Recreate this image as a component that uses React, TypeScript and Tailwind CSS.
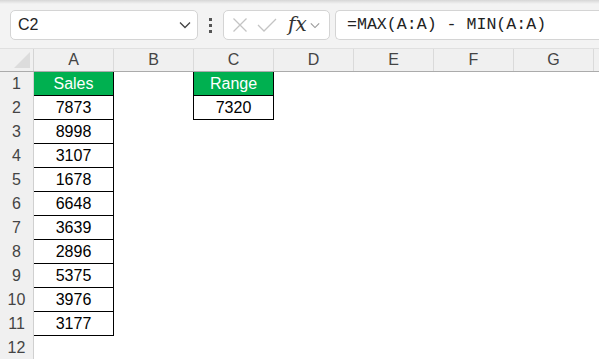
const cols = ["A", "B", "C", "D", "E", "F", "G"];
const sales = [7873, 8998, 3107, 1678, 6648, 3639, 2896, 5375, 3976, 3177];

type Cell = { text?: string; kind?: "head" | "data" };

function cellFor(row: number, col: string): Cell {
  if (col === "A") {
    if (row === 1) return { text: "Sales", kind: "head" };
    if (row <= 11) return { text: String(sales[row - 2]), kind: "data" };
  }
  if (col === "C") {
    if (row === 1) return { text: "Range", kind: "head" };
    if (row === 2) return { text: "7320", kind: "data" };
  }
  return {};
}

const Chevron = ({ className }: { className?: string }) => (
  <svg viewBox="0 0 12 8" className={className} fill="none" stroke="currentColor" strokeWidth="1.3">
    <path d="M1 1.5 L6 6.5 L11 1.5" />
  </svg>
);

export default function App() {
  const rows = Array.from({ length: 12 }, (_, i) => i + 1);
  return (
    <div className="w-[599px] h-[359px] overflow-hidden bg-white font-['Liberation_Sans',sans-serif]">
      {/* formula bar */}
      <div className="h-[48px] bg-[#f3f3f3] relative overflow-hidden">
        <div className="absolute inset-x-0 top-0 h-[4px] bg-gradient-to-b from-[#d6d6d6] to-[#f3f3f3]" />
        <div className="flex items-start pt-[10px] pl-[10px]">
          <div className="shrink-0 w-[188px] h-[30px] bg-white border border-[#d4d4d4] rounded-[5px] flex items-center justify-between pl-[7px] pr-[6px] text-[16px] text-[#222]">
            <span>C2</span>
            <Chevron className="w-[12px] h-[8px] text-[#444]" />
          </div>
          <div className="shrink-0 w-[25px] h-[30px] flex flex-col items-center justify-center gap-[3px]">
            <span className="w-[3px] h-[3px] bg-[#555]" />
            <span className="w-[3px] h-[3px] bg-[#555]" />
            <span className="w-[3px] h-[3px] bg-[#555]" />
          </div>
          <div className="shrink-0 w-[107px] h-[30px] bg-white border border-[#d4d4d4] rounded-[5px] flex items-center pl-[8px] gap-[9px]">
            <svg viewBox="0 0 16 16" className="w-[16px] h-[16px]" stroke="#c4c4c4" strokeWidth="1.3" fill="none">
              <path d="M1.5 1.5 L14.5 14.5 M14.5 1.5 L1.5 14.5" />
            </svg>
            <svg viewBox="0 0 20 16" className="w-[20px] h-[16px]" stroke="#c4c4c4" strokeWidth="1.3" fill="none">
              <path d="M1 8 L7 14 L19 2" />
            </svg>
            <span className="font-['DejaVu_Serif',serif] italic text-[20px] text-[#333] leading-none ml-[2px] -mt-[2px]">fx</span>
            <Chevron className="w-[10px] h-[7px] text-[#999] -ml-[6px]" />
          </div>
          <div className="shrink-0 ml-[5px] w-[280px] h-[30px] bg-white border border-[#d4d4d4] rounded-l-[5px] border-r-0 flex items-center pl-[11px] font-['Liberation_Mono',monospace] text-[16.6px] text-[#222]">
            =MAX(A:A) - MIN(A:A)
          </div>
        </div>
      </div>

      {/* column headers */}
      <div className="flex h-[24px] bg-[#f0f0f0] border-t border-[#e0e0e0] border-b border-b-[#ababab]">
        <div className="w-[34px] shrink-0 h-full border-r border-[#d4d4d4] flex items-end justify-end pr-[3px] pb-[3px]">
          <svg viewBox="0 0 16 16" className="w-[16px] h-[16px]">
            <path d="M16 0 L16 16 L0 16 Z" fill="#dcdcdc" />
          </svg>
        </div>
        {cols.map((c) => (
          <div
            key={c}
            className="w-[80px] shrink-0 h-full border-r border-[#dadada] flex items-center justify-center text-[16px] text-[#444]"
          >
            {c}
          </div>
        ))}
      </div>

      {/* rows */}
      {rows.map((r) => (
        <div key={r} className="flex h-[24px]">
          <div className="w-[34px] shrink-0 h-full bg-[#f0f0f0] border-r border-[#d0d0d0] flex items-center justify-center text-[16px] text-[#444]">
            {r}
          </div>
          {cols.map((c) => {
            const cell = cellFor(r, c);
            const base = "w-[80px] shrink-0 h-full flex items-center justify-center text-[16px]";
            if (!cell.kind) return <div key={c} className={base} />;
            const edge = c === "C" ? " shadow-[-1px_0_0_#000]" : "";
            const look =
              cell.kind === "head"
                ? " bg-[#00b050] text-white border-r border-b border-black"
                : " bg-white text-black border-r border-b border-black";
            return (
              <div key={c} className={base + look + edge}>
                {cell.text}
              </div>
            );
          })}
        </div>
      ))}
    </div>
  );
}
